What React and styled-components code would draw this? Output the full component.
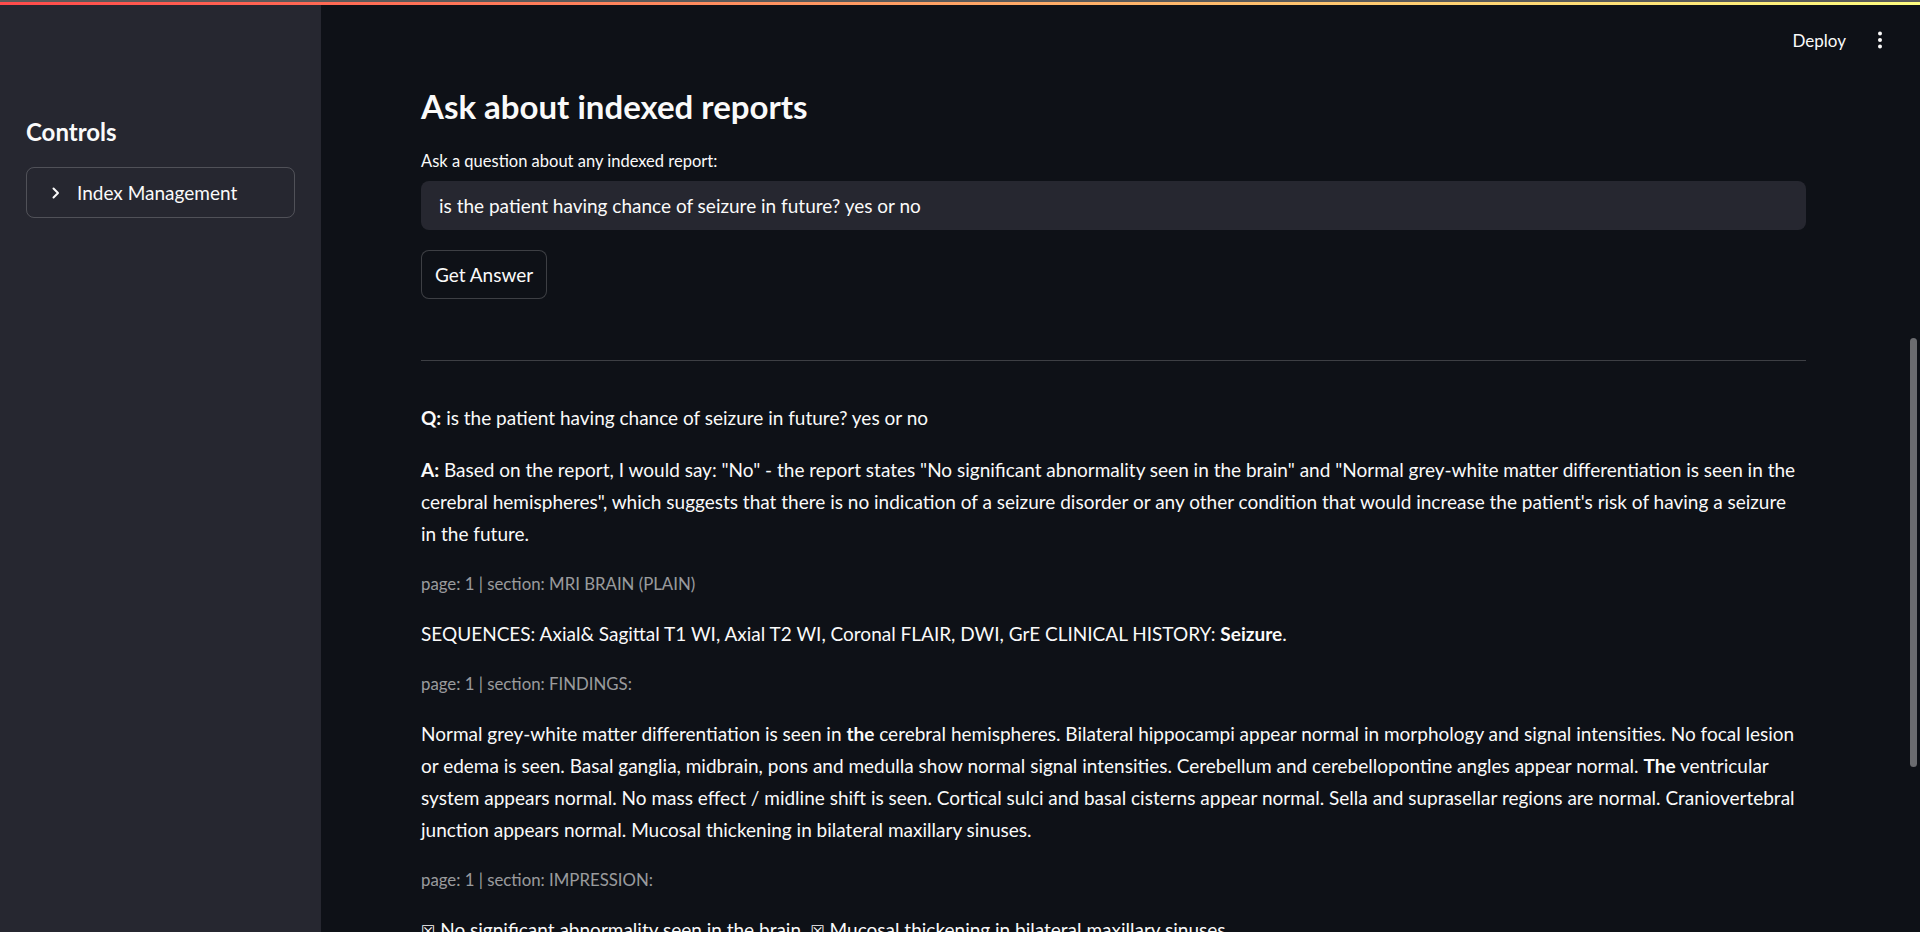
import React from "react";
import styled, { createGlobalStyle } from "styled-components";

const GlobalStyle = createGlobalStyle`
  html, body {
    margin: 0;
    padding: 0;
    height: 100%;
    overflow: hidden;
    background-color: #0e1117;
  }
  #root {
    height: 100%;
  }
  * {
    box-sizing: border-box;
  }
`;

const FONT = `"Lato", "Liberation Sans", sans-serif`;

const Page = styled.div`
  display: flex;
  flex-direction: column;
  height: 100vh;
  font-family: ${FONT};
  color: #fafafa;
  background-color: #0e1117;
`;

const Decoration = styled.div`
  flex: 0 0 auto;
  height: 5px;
  border-top: 2px solid #5a5a5a;
  background-image: linear-gradient(90deg, #ff4b4b, #fffd80);
`;

const Body = styled.div`
  flex: 1;
  display: flex;
  min-height: 0;
`;

const Sidebar = styled.aside`
  flex: 0 0 320px;
  background-color: #262730;
  padding: 110px 26px 0 26px;
  display: flex;
  flex-direction: column;
  gap: 18px;
`;

const SidebarTitle = styled.h2`
  margin: 0;
  font-size: 24px;
  font-weight: 700;
  line-height: 34px;
  color: #fafafa;
`;

const Expander = styled.div`
  display: flex;
  align-items: center;
  gap: 14px;
  height: 51px;
  width: 269px;
  padding: 0 22px;
  border: 1px solid rgba(250, 250, 250, 0.2);
  border-radius: 8px;
  font-size: 19px;
  color: #fafafa;
`;

const Main = styled.main`
  flex: 1;
  position: relative;
  display: flex;
  flex-direction: column;
  overflow: hidden;
`;

const Toolbar = styled.header`
  flex: 0 0 80px;
  display: flex;
  align-items: flex-start;
  justify-content: flex-end;
  gap: 31px;
  padding: 26px 37px 0 0;
`;

const DeployButton = styled.span`
  font-size: 17px;
  line-height: 20px;
  color: #fafafa;
`;

const Content = styled.section`
  padding: 0 114px 0 100px;
  display: flex;
  flex-direction: column;
`;

const Title = styled.h1`
  margin: 0 0 22px 0;
  font-size: 33px;
  font-weight: 700;
  line-height: 42px;
  color: #fafafa;
`;

const Label = styled.label`
  font-size: 16.5px;
  line-height: 24px;
  color: #fafafa;
`;

const QuestionInput = styled.div`
  margin-top: 8px;
  height: 49px;
  display: flex;
  align-items: center;
  padding: 0 18px;
  background-color: #262730;
  border-radius: 8px;
  font-size: 19px;
  color: #fafafa;
`;

const Button = styled.button`
  margin-top: 20px;
  align-self: flex-start;
  height: 49px;
  padding: 0 13px;
  background-color: #0e1117;
  border: 1px solid rgba(250, 250, 250, 0.2);
  border-radius: 8px;
  font-family: ${FONT};
  font-size: 19px;
  color: #fafafa;
`;

const Divider = styled.hr`
  margin: 61px 0 41px 0;
  border: none;
  border-top: 1px solid rgba(250, 250, 250, 0.2);
`;

const Answers = styled.div`
  display: flex;
  flex-direction: column;
  gap: 20px;
`;

const Paragraph = styled.p`
  margin: 0;
  font-size: 19px;
  line-height: 32px;
  color: #fafafa;

  & b {
    font-weight: 700;
  }
`;

const Meta = styled.p`
  margin: 0;
  font-size: 16.8px;
  line-height: 28px;
  color: rgba(250, 250, 250, 0.6);
`;

const Glyph = styled.span`
  font-family: "DejaVu Sans", sans-serif;
  font-size: 16px;
`;

const ScrollThumb = styled.div`
  position: absolute;
  right: 3px;
  top: 333px;
  width: 7px;
  height: 429px;
  border-radius: 4px;
  background-color: #6b6c70;
`;

const Chevron = () => (
  <svg width="14" height="14" viewBox="0 0 14 14" fill="none">
    <path d="M4.5 2.5 L9 7 L4.5 11.5" stroke="#fafafa" strokeWidth="2" strokeLinecap="round" strokeLinejoin="round" />
  </svg>
);

const Kebab = () => (
  <svg width="6" height="18" viewBox="0 0 6 18">
    <circle cx="3" cy="2.5" r="2" fill="#fafafa" />
    <circle cx="3" cy="9" r="2" fill="#fafafa" />
    <circle cx="3" cy="15.5" r="2" fill="#fafafa" />
  </svg>
);

const question = "is the patient having chance of seizure in future? yes or no";

export default function App() {
  return (
    <>
      <GlobalStyle />
      <Page>
        <Decoration />
        <Body>
          <Sidebar>
            <SidebarTitle>Controls</SidebarTitle>
            <Expander>
              <Chevron />
              <span>Index Management</span>
            </Expander>
          </Sidebar>
          <Main>
            <Toolbar>
              <DeployButton>Deploy</DeployButton>
              <Kebab />
            </Toolbar>
            <Content>
              <Title>Ask about indexed reports</Title>
              <Label>Ask a question about any indexed report:</Label>
              <QuestionInput>{question}</QuestionInput>
              <Button>Get Answer</Button>
              <Divider />
              <Answers>
                <Paragraph>
                  <b>Q:</b> {question}
                </Paragraph>
                <Paragraph>
                  <b>A:</b> Based on the report, I would say: "No" - the report states "No significant abnormality
                  seen in the brain" and "Normal grey-white matter differentiation is seen in the cerebral
                  hemispheres", which suggests that there is no indication of a seizure disorder or any other
                  condition that would increase the patient's risk of having a seizure in the future.
                </Paragraph>
                <Meta>page: 1 | section: MRI BRAIN (PLAIN)</Meta>
                <Paragraph>
                  SEQUENCES: Axial&amp; Sagittal T1 WI, Axial T2 WI, Coronal FLAIR, DWI, GrE CLINICAL HISTORY:{" "}
                  <b>Seizure</b>.
                </Paragraph>
                <Meta>page: 1 | section: FINDINGS:</Meta>
                <Paragraph>
                  Normal grey-white matter differentiation is seen in <b>the</b> cerebral hemispheres. Bilateral
                  hippocampi appear normal in morphology and signal intensities. No focal lesion or edema is seen.
                  Basal ganglia, midbrain, pons and medulla show normal signal intensities. Cerebellum and
                  cerebellopontine angles appear normal. <b>The</b> ventricular system appears normal. No mass effect
                  / midline shift is seen. Cortical sulci and basal cisterns appear normal. Sella and suprasellar
                  regions are normal. Craniovertebral junction appears normal. Mucosal thickening in bilateral
                  maxillary sinuses.
                </Paragraph>
                <Meta>page: 1 | section: IMPRESSION:</Meta>
                <Paragraph>
                  <Glyph>☒</Glyph> No significant abnormality seen in the brain. <Glyph>☒</Glyph> Mucosal thickening
                  in bilateral maxillary sinuses.
                </Paragraph>
              </Answers>
            </Content>
            <ScrollThumb />
          </Main>
        </Body>
      </Page>
    </>
  );
}
